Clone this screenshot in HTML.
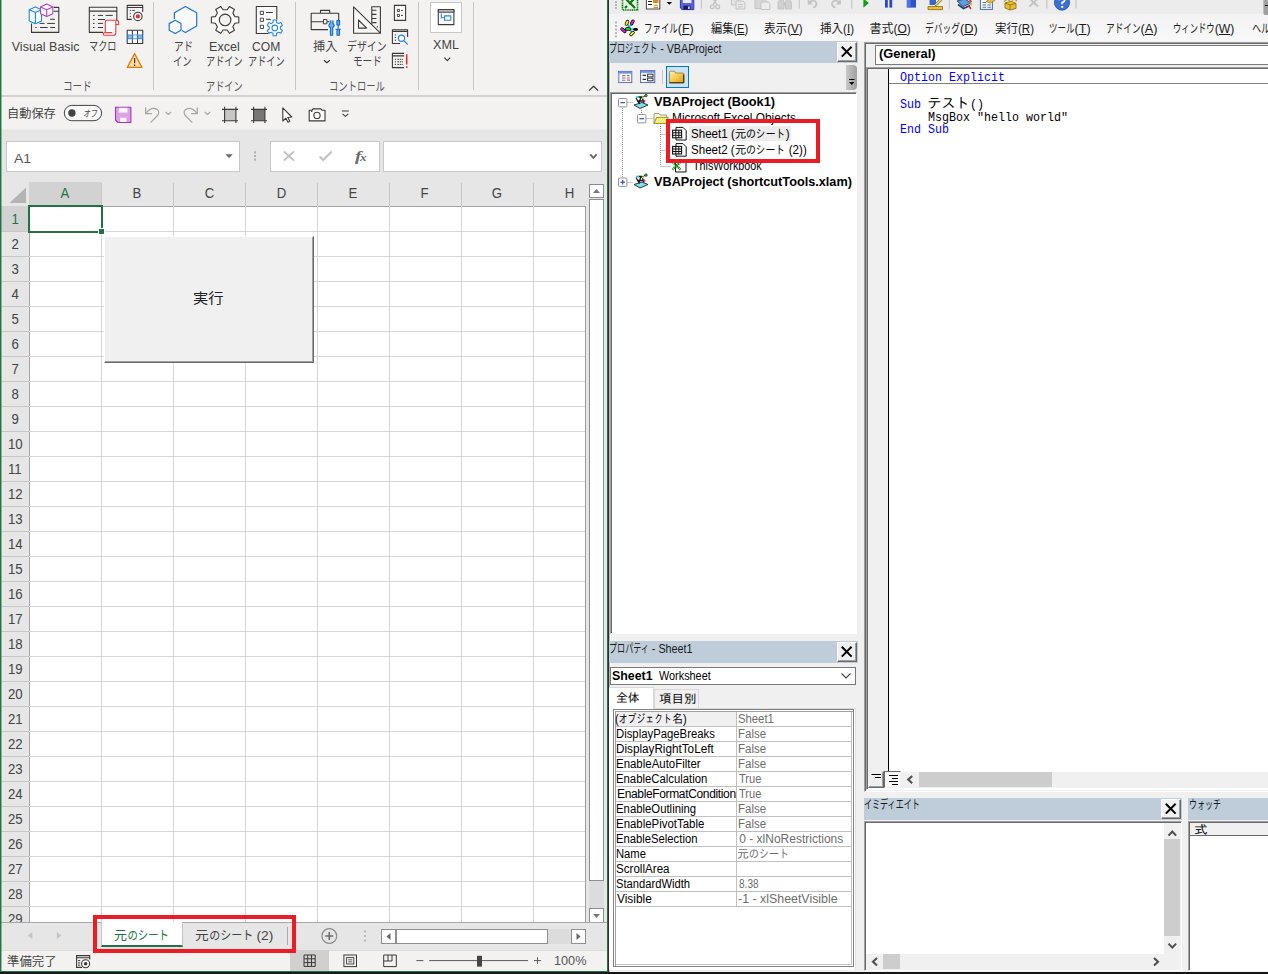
<!DOCTYPE html>
<html lang="ja"><head><meta charset="utf-8"><title>Excel VBA</title>
<style>
*{box-sizing:border-box;margin:0;padding:0}
html,body{width:1268px;height:974px;overflow:hidden;background:#f0f0f0}
body{position:relative;font-family:"Liberation Sans","Noto Sans CJK JP",sans-serif;font-size:12px;color:#444}
.a{position:absolute}
.t{position:absolute;white-space:nowrap;transform-origin:0 50%}
.k{display:inline-block;transform-origin:0 50%}
#xl{position:absolute;left:0;top:0;width:609px;height:974px;background:#fff;overflow:hidden}
#vbe{position:absolute;left:609px;top:0;width:659px;height:974px;background:#f0f0f0;overflow:hidden;font-family:"Liberation Sans","IPAGothic",sans-serif;color:#000}
.sep{position:absolute;width:1px;background:#c8c6c4;top:2px;height:88px}
.ch{position:absolute;background:#e6e6e6;top:182px;height:24px;text-align:center;line-height:22px;font-size:15px;color:#444}
.rh{position:absolute;background:#e6e6e6;left:1px;width:28px;text-align:center;font-size:15px;color:#444;line-height:26px;height:25px}
.vl{position:absolute;top:206px;width:1px;height:717px;background:#d6d6d6}
.hl{position:absolute;left:29px;height:1px;width:557px;background:#d6d6d6}
.cap{position:absolute;background:#bfcddb;height:22px}
.xb{position:absolute;width:20px;height:20px;background:#f0f0f0;border:1px solid;border-color:#fff #696969 #696969 #fff;box-shadow:inset -1px -1px 0 #a0a0a0}
.sunk{position:absolute;background:#fff;border:1px solid;border-color:#a0a0a0 #fff #fff #a0a0a0;box-shadow:inset 1px 1px 0 #696969}
.prl{position:absolute;height:1px;background:#c0c0c0}
.kw{color:#00f}
.hx{display:inline-block;transform:scaleX(.88)}
</style></head>
<body>
<div id="xl">
<div class="a" style="left:0;top:0;width:609px;height:96px;background:#f3f2f1"></div>
<div class="a" style="left:0;top:95px;width:609px;height:2px;background:#d4d2d0"></div>
<div class="a" style="left:0;top:97px;width:609px;height:34px;background:#f3f2f1"></div>
<div class="a" style="left:0;top:129px;width:609px;height:3px;background:linear-gradient(#ecebea,#e2e2e2)"></div>
<div class="a" style="left:0;top:132px;width:609px;height:50px;background:#e6e6e6"></div>
<div class="t" style="left:11.75px;top:38.5px;font-size:12.5px;line-height:16px;color:#444;">Visual Basic</div>
<div class="t" style="left:89.20px;top:38.5px;font-size:12px;line-height:16px;color:#444;transform:scaleX(1.0629);"><span class="k" style="transform:scaleX(0.72);margin-right:-10.08px">マクロ</span></div>
<div class="t" style="left:62.69px;top:78.8px;font-size:12px;line-height:16px;color:#555;transform:scaleX(1.1128);"><span class="k" style="transform:scaleX(0.72);margin-right:-10.08px">コード</span></div>
<div class="t" style="left:173.92px;top:38.5px;font-size:12px;line-height:16px;color:#444;transform:scaleX(1.1023);"><span class="k" style="transform:scaleX(0.72);margin-right:-6.72px">アド</span></div>
<div class="t" style="left:173.11px;top:54.0px;font-size:12px;line-height:16px;color:#444;transform:scaleX(1.0768);"><span class="k" style="transform:scaleX(0.72);margin-right:-6.72px">イン</span></div>
<div class="t" style="left:209.10px;top:38.5px;font-size:12.5px;line-height:16px;color:#444;">Excel</div>
<div class="t" style="left:206.30px;top:54.0px;font-size:12px;line-height:16px;color:#444;transform:scaleX(1.0579);"><span class="k" style="transform:scaleX(0.72);margin-right:-13.44px">アドイン</span></div>
<div class="t" style="left:252.36px;top:38.5px;font-size:12.5px;line-height:16px;color:#444;transform:scaleX(0.9683);">COM</div>
<div class="t" style="left:248.08px;top:54.0px;font-size:12px;line-height:16px;color:#444;transform:scaleX(1.0579);"><span class="k" style="transform:scaleX(0.72);margin-right:-13.44px">アドイン</span></div>
<div class="t" style="left:206.30px;top:78.8px;font-size:12px;line-height:16px;color:#555;transform:scaleX(1.0579);"><span class="k" style="transform:scaleX(0.72);margin-right:-13.44px">アドイン</span></div>
<div class="t" style="left:312.88px;top:38.5px;font-size:12px;line-height:16px;color:#444;transform:scaleX(1.0137);">挿入</div>
<div class="t" style="left:347.35px;top:38.5px;font-size:12px;line-height:16px;color:#444;transform:scaleX(1.1490);"><span class="k" style="transform:scaleX(0.72);margin-right:-13.44px">デザイン</span></div>
<div class="t" style="left:353.30px;top:54.0px;font-size:12px;line-height:16px;color:#444;transform:scaleX(1.1090);"><span class="k" style="transform:scaleX(0.72);margin-right:-10.08px">モード</span></div>
<div class="t" style="left:328.78px;top:78.8px;font-size:12px;line-height:16px;color:#555;transform:scaleX(1.0786);"><span class="k" style="transform:scaleX(0.72);margin-right:-20.16px">コントロール</span></div>
<div class="t" style="left:432.62px;top:36.8px;font-size:12.5px;line-height:16px;color:#444;transform:scaleX(1.0074);">XML</div>
<div class="sep" style="left:153px"></div>
<div class="sep" style="left:295px"></div>
<div class="sep" style="left:418px"></div>
<div class="sep" style="left:473px"></div>
<svg class="a" style="left:0;top:0" width="609" height="96" viewBox="0 0 609 96" fill="none" stroke-linejoin="round">
<path d="M53.5 7.4 H58.8 V32.4 H31.5 V23.5 M53.5 11.3 H58.8" stroke="#3b3a39" stroke-width="1.1"/>
<path d="M50.2 19.3 H54.9 M39.5 23.4 H44.6 M47.2 23.4 H54.9 M35.2 27.5 H36.6 M40 27.5 H47.7 M50.2 27.5 H54.9" stroke="#3b3a39" stroke-width="1"/>
<path d="M35.4 7 L41.5 9.7 V21 L35.4 23.8 L29.2 21 V9.7 Z" fill="#fafafa" stroke="#1e8bd8" stroke-width="1.1"/><path d="M29.2 9.7 L35.4 12.5 L41.5 9.7 M35.4 12.5 V23.8" stroke="#1e8bd8" stroke-width="1.1"/>
<path d="M46.7 4.1 L52.8 7 V13.8 L46.7 16.6 L40.5 13.8 V7 Z" fill="#fafafa" stroke="#b146c2" stroke-width="1.1"/><path d="M40.5 7 L46.7 9.7 L52.8 7 M46.7 9.7 V16.6" stroke="#b146c2" stroke-width="1.1"/>
<path d="M103 32.4 H89.3 V7.3 H116.8 V20 M89.3 11.1 H116.8" stroke="#3b3a39" stroke-width="1.1"/>
<path d="M93 15.4 H94.6 M97.9 15.4 H103 M105.6 15.4 H112.8 M93 19.5 H94.6 M97.9 19.5 H105 M93 23.4 H94.6 M97.9 23.4 H103 M93 27.5 H94.6 M97.9 27.5 H103" stroke="#3b3a39" stroke-width="1"/>
<path d="M105.3 32.6 V22.2 Q105.3 20.3 107.2 20.3 H116.5 Q118.7 20.3 118.7 22.4 V24.5 H115.8 V33 Q115.8 35.3 113.6 35.3 H105 Q103.2 35.3 103.2 33.9 Q103.2 32.6 105 32.6 H112.3" fill="#fafafa" stroke="#ee3b3e" stroke-width="1.1"/><path d="M115.8 24.5 V22.4 Q115.8 20.3 116.5 20.3" stroke="#ee3b3e" stroke-width="1.1"/>
<path d="M131.8 19.4 H127.2 V5.4 H142.7 V12 M127.2 7.5 H142.7" stroke="#3b3a39" stroke-width="1.1"/>
<path d="M129.8 10.4 H130.9 M132.3 10.4 H134.8 M129.8 13.4 H130.9 M129.8 16.4 H130.9" stroke="#3b3a39" stroke-width="1"/>
<circle cx="137.9" cy="16.4" r="4.2" fill="#fafafa" stroke="#3b3a39" stroke-width="1.1"/><circle cx="137.9" cy="16.4" r="2.1" fill="#e8282e"/>
<rect x="127.2" y="30.3" width="15.5" height="13.2" fill="#fafafa" stroke="#3b3a39" stroke-width="1.1"/>
<rect x="127.2" y="34.6" width="15.5" height="4.6" fill="#2b7cd3"/><rect x="128.2" y="35.3" width="3.6" height="3.2" fill="#83b9ee"/><rect x="133.2" y="35.3" width="3.6" height="3.2" fill="#fafafa"/><rect x="138.2" y="35.3" width="3.6" height="3.2" fill="#83b9ee"/>
<path d="M132.4 30.3 V34.6 M137.5 30.3 V34.6 M132.4 39.2 V43.5 M137.5 39.2 V43.5" stroke="#3b3a39" stroke-width="1"/>
<path d="M134.6 53.6 L142 67.4 H127.3 Z" fill="#fbd9a0" stroke="#e07c0c" stroke-width="1.2"/><path d="M134.6 58 V63.2 M134.6 64.6 V66" stroke="#3b3a39" stroke-width="1.2"/>
<path d="M174.4 19 V12.8 L185.4 6.4 L196.7 12.8 V26.1 L185.4 32.6 L182 30.6" fill="#fafafa" stroke="#1e74d2" stroke-width="1.2"/>
<path d="M175.2 20.3 L181 23.6 V30.2 L175.2 33.6 L169.2 30.2 V23.6 Z" fill="#fafafa" stroke="#1e74d2" stroke-width="1.2"/>
<path d="M234.86 16.61 L238.80 17.01 L238.80 22.79 L234.86 23.19 L232.83 26.71 L234.45 30.32 L229.45 33.21 L227.14 30.00 L223.06 30.00 L220.75 33.21 L215.75 30.32 L217.37 26.71 L215.34 23.19 L211.40 22.79 L211.40 17.01 L215.34 16.61 L217.37 13.09 L215.75 9.48 L220.75 6.59 L223.06 9.80 L227.14 9.80 L229.45 6.59 L234.45 9.48 L232.83 13.09 Z" fill="#fafafa" stroke="#3b3a39" stroke-width="1.1"/><circle cx="225.1" cy="19.9" r="5.8" stroke="#3b3a39" stroke-width="1.1" fill="#f3f2f1"/>
<path d="M268.5 33.5 H256.3 V6.5 H276.8 V19.5" stroke="#3b3a39" stroke-width="1.1" fill="#fafafa"/>
<rect x="260.3" y="11.3" width="3.2" height="3.2" stroke="#3b3a39" stroke-width="0.9"/>
<rect x="260.3" y="18.2" width="3.2" height="3.2" stroke="#3b3a39" stroke-width="0.9"/>
<rect x="260.3" y="25.3" width="3.2" height="3.2" stroke="#3b3a39" stroke-width="0.9"/>
<path d="M266.1 12.5 H272.8 M266.1 19.3 H271" stroke="#3b3a39" stroke-width="1"/>
<path d="M280.39 29.03 L282.40 30.38 L280.75 33.24 L278.57 32.18 L276.62 33.30 L276.45 35.73 L273.15 35.73 L272.98 33.30 L271.03 32.18 L268.85 33.24 L267.20 30.38 L269.21 29.03 L269.21 26.77 L267.20 25.42 L268.85 22.56 L271.03 23.62 L272.98 22.50 L273.15 20.07 L276.45 20.07 L276.62 22.50 L278.57 23.62 L280.75 22.56 L282.40 25.42 L280.39 26.77 Z" fill="#fafafa" stroke="#2b88d8" stroke-width="1.1"/><circle cx="274.8" cy="27.9" r="2.8" stroke="#2b88d8" stroke-width="1.1"/>
<path d="M328 29.6 H311.2 V13.2 H338.7 V20 M320.5 13.2 V10.4 H329.7 V13.2 M311.2 21.7 H323.4 M326.9 21.7 H329" stroke="#3b3a39" stroke-width="1.1" fill="none"/><rect x="323.4" y="19.6" width="3.5" height="4.2" stroke="#3b3a39" stroke-width="1" fill="#fafafa"/>
<path d="M330.1 20.6 V23.2 Q328.9 24 328.9 25.4 Q329 27 330.4 27.6 V35.2 H332.7 V27.6 Q334.1 27 334.2 25.4 Q334.2 24 333 23.2 V20.6" fill="#6bb1ef" stroke="#106ebe" stroke-width="1.1"/>
<path d="M336.9 20.6 H339.6 V25 H336.9 Z M338.25 25 V28.4 M335.6 29.3 H340.9 M337 29.3 V35.2 H339.5 V29.3" fill="#6bb1ef" stroke="#106ebe" stroke-width="1.1"/>
<path d="M324 60.2 L326.9 62.7 L329.8 60.2" stroke="#3b3a39" stroke-width="1.2"/><path d="M444.4 57.6 L447.3 60.6 L450.2 57.6" stroke="#3b3a39" stroke-width="1.2"/>
<path d="M353.6 6.8 V33.2 H380.4 Z" fill="#fafafa" stroke="#3b3a39" stroke-width="1.1"/><path d="M358.5 20 V28.1 H366.7 Z" stroke="#3b3a39" stroke-width="1.1" fill="#f3f2f1"/>
<path d="M371.8 24.6 V6.8 H380.4 V33.2 M372.3 10.3 H376.4 M372.3 14.4 H376.4 M372.3 18.5 H376.4 M372.6 22.6 H376.4 M376.8 26.9 H378" stroke="#3b3a39" stroke-width="1.1"/>
<rect x="394.4" y="5.4" width="11.2" height="15" fill="#fafafa" stroke="#3b3a39" stroke-width="1.1"/><rect x="397.4" y="9.4" width="2.1" height="2.1" stroke="#3b3a39" stroke-width="0.9"/><rect x="397.4" y="14.4" width="2.1" height="2.1" stroke="#3b3a39" stroke-width="0.9"/><path d="M401 10.5 H402.9 M401 15.4 H402.9" stroke="#3b3a39" stroke-width="1"/>
<path d="M400 43.5 H392.4 V29.8 H407.6 V37 M392.4 31.4 H407.6" stroke="#3b3a39" stroke-width="1.1"/><path d="M394.8 34.9 H396 M394.8 37.4 H396 M394.8 40.2 H396" stroke="#3b3a39" stroke-width="1"/>
<circle cx="401.5" cy="38.3" r="3.1" stroke="#2b88d8" stroke-width="1.2" fill="#fafafa"/><path d="M403.8 40.6 L407.8 44.6" stroke="#2b88d8" stroke-width="1.3"/>
<path d="M404.1 67.6 H392.4 V53.4 H404.1 M392.4 55.9 H404.1" stroke="#3b3a39" stroke-width="1.1"/><path d="M394.8 59.3 H396 M397.4 59.3 H403 M394.8 61.8 H396 M397.4 61.8 H403 M394.8 64.4 H396 M397.4 64.4 H403" stroke="#3b3a39" stroke-width="1" stroke-dasharray="1.6 0.8"/>
<path d="M406.7 54.3 V64.4 M406.7 66.2 V68" stroke="#e8282e" stroke-width="1.5"/>
<rect x="430.5" y="2.5" width="31" height="30" fill="#fff" stroke="#c8c6c4" stroke-width="1"/>
<rect x="438.3" y="9.6" width="15.6" height="15" fill="#fafafa" stroke="#3b3a39" stroke-width="1.1"/><rect x="438.3" y="9.6" width="15.6" height="2.6" fill="#c8c6c4" stroke="#3b3a39" stroke-width="1"/>
<path d="M441.3 13.4 V17.8 H444.5" stroke="#2b88d8" stroke-width="1.1"/><rect x="444.6" y="15.9" width="6.2" height="4.3" stroke="#2b88d8" stroke-width="1.1" fill="#fafafa"/>
<path d="M589 90.6 L593.6 86.2 L598.2 90.6" stroke="#3b3a39" stroke-width="1.3"/>
</svg>
<div class="t" style="left:7.13px;top:105.6px;font-size:12px;line-height:16px;color:#444;transform:scaleX(1.0170);">自動保存</div>
<svg class="a" style="left:0;top:97px" width="609" height="34" viewBox="0 97 609 34" fill="none" stroke-linejoin="round">
<rect x="64.3" y="105.4" width="37.3" height="15.3" rx="7.6" fill="#fafafa" stroke="#444" stroke-width="1"/><circle cx="71.9" cy="113" r="3.7" fill="#444"/>
<path d="M115.5 107.2 H130.9 V122.5 H118 L115.5 120 Z" fill="#dba3e3" stroke="#a335b8" stroke-width="1.1"/><rect x="118.9" y="107.8" width="8.6" height="4.8" fill="#fdf6ff"/><rect x="120.2" y="117.7" width="6.2" height="4.3" fill="#fdf6ff"/>
<path d="M145.6 107.5 V113.7 H151.9" stroke="#a6a6a6" stroke-width="1.2"/><path d="M146 113.4 Q150 107.6 155.5 108.6 Q160.4 110.4 158 115 L150.6 122.6" stroke="#a6a6a6" stroke-width="1.2"/>
<path d="M165.6 112 L168.3 114.5 L171 112" stroke="#a6a6a6" stroke-width="1.1"/>
<path d="M197.3 107.5 V113.7 H191" stroke="#a6a6a6" stroke-width="1.2"/><path d="M196.9 113.4 Q192.9 107.6 187.4 108.6 Q182.5 110.4 184.9 115 L192.3 122.6" stroke="#a6a6a6" stroke-width="1.2"/>
<path d="M204.7 112 L207.4 114.5 L210.1 112" stroke="#a6a6a6" stroke-width="1.1"/>
<rect x="224.6" y="109.4" width="11.3" height="11.3" fill="#c8c6c4"/><path d="M222 109.4 H238 M222 120.7 H238 M224.6 106.8 V122.9 M235.9 106.8 V122.9" stroke="#3b3a39" stroke-width="1.1"/>
<rect x="253.6" y="109.4" width="11.3" height="11.3" fill="#797775"/><path d="M251 109.4 H267 M251 120.7 H267 M253.6 106.8 V122.9 M264.9 106.8 V122.9" stroke="#3b3a39" stroke-width="1.1"/>
<path d="M282.8 107.9 V121 L285.9 118.2 L288 122.2 L289.8 121.3 L287.8 117.5 L291.8 117 Z" fill="#fff" stroke="#3b3a39" stroke-width="1.1"/>
<path d="M309.2 110.2 H312 L313 108.9 H321 L322 110.2 H325 V120.9 H309.2 Z" stroke="#3b3a39" stroke-width="1.1" fill="#fafafa"/><circle cx="317" cy="115.4" r="3.1" stroke="#3b3a39" stroke-width="1.1"/><circle cx="311.7" cy="111.3" r="0.8" fill="#3b3a39"/>
<path d="M341.9 111 H348.8 M342.5 113.8 L345.4 116.4 L348.3 113.8" stroke="#3b3a39" stroke-width="1.1"/>
</svg>
<div class="t" style="left:82.51px;top:108.2px;font-size:9.5px;line-height:12px;color:#444;transform:scaleX(0.9201);font-style:italic;"><span class="k" style="transform:scaleX(0.8);margin-right:-3.80px">オフ</span></div>
<div class="a" style="left:6px;top:141px;width:234px;height:31px;background:#fff;border:1px solid #c8c8c8"></div>
<div class="t" style="left:13.59px;top:149.8px;font-size:13.5px;line-height:18px;color:#555;transform:scaleX(1.0384);">A1</div>
<div class="a" style="left:270px;top:141px;width:110px;height:31px;background:#fff;border:1px solid #c8c8c8"></div>
<div class="a" style="left:383px;top:141px;width:219px;height:31px;background:#fff;border:1px solid #c8c8c8"></div>
<div class="t" style="left:355.02px;top:146.5px;font-size:14.5px;line-height:19px;color:#6a6a6a;font-family:'Liberation Serif',serif;transform:scaleX(1.3237);font-style:italic;font-weight:bold;letter-spacing:-1px;">f<span style="font-size:10px">x</span></div>
<svg class="a" style="left:0;top:140px" width="609" height="34" viewBox="0 140 609 34" fill="none">
<path d="M225.4 154.2 H232.8 L229.1 158 Z" fill="#666"/>
<rect x="254" y="151.4" width="2" height="2" fill="#b0b0b0"/><rect x="254" y="155" width="2" height="2" fill="#b0b0b0"/><rect x="254" y="158.6" width="2" height="2" fill="#b0b0b0"/>
<path d="M283.8 151.4 L294 160.6 M294 151.4 L283.8 160.6" stroke="#bcbcbc" stroke-width="1.7"/>
<path d="M319.6 156.4 L323.2 160 L331.8 151.6" stroke="#c0c0c0" stroke-width="2.1"/>
<path d="M590.2 154.4 L593.4 157.8 L596.6 154.4" stroke="#666" stroke-width="1.9"/>
</svg>
<div class="a" style="left:0;top:182px;width:609px;height:24px;background:#e6e6e6"></div>
<div class="ch" style="left:29px;width:72px;background:#d2d2d2;color:#217346"><span class="hx">A</span></div>
<div class="ch" style="left:101px;width:72px;background:#e6e6e6;color:#444"><span class="hx">B</span></div>
<div class="ch" style="left:173px;width:72px;background:#e6e6e6;color:#444"><span class="hx">C</span></div>
<div class="ch" style="left:245px;width:72px;background:#e6e6e6;color:#444"><span class="hx">D</span></div>
<div class="ch" style="left:317px;width:72px;background:#e6e6e6;color:#444"><span class="hx">E</span></div>
<div class="ch" style="left:389px;width:72px;background:#e6e6e6;color:#444"><span class="hx">F</span></div>
<div class="ch" style="left:461px;width:72px;background:#e6e6e6;color:#444"><span class="hx">G</span></div>
<div class="ch" style="left:533px;width:72px;background:#e6e6e6;color:#444"><span class="hx">H</span></div>
<div class="a" style="left:101px;top:183px;width:1px;height:23px;background:#c6c6c6"></div>
<div class="a" style="left:173px;top:183px;width:1px;height:23px;background:#c6c6c6"></div>
<div class="a" style="left:245px;top:183px;width:1px;height:23px;background:#c6c6c6"></div>
<div class="a" style="left:317px;top:183px;width:1px;height:23px;background:#c6c6c6"></div>
<div class="a" style="left:389px;top:183px;width:1px;height:23px;background:#c6c6c6"></div>
<div class="a" style="left:461px;top:183px;width:1px;height:23px;background:#c6c6c6"></div>
<div class="a" style="left:533px;top:183px;width:1px;height:23px;background:#c6c6c6"></div>
<div class="a" style="left:605px;top:183px;width:1px;height:23px;background:#c6c6c6"></div>
<div class="a" style="left:1px;top:206px;width:586px;height:1px;background:#a6a6a6"></div>
<svg class="a" style="left:8px;top:186px" width="20" height="18"><path d="M1.5 17 L18 17 L18 1.5 Z" fill="#b4b4b4"/></svg>
<div class="rh" style="top:206px;background:#d2d2d2;color:#217346"><span class="hx">1</span></div>
<div class="rh" style="top:231px;background:#e6e6e6;color:#444"><span class="hx">2</span></div>
<div class="rh" style="top:256px;background:#e6e6e6;color:#444"><span class="hx">3</span></div>
<div class="rh" style="top:281px;background:#e6e6e6;color:#444"><span class="hx">4</span></div>
<div class="rh" style="top:306px;background:#e6e6e6;color:#444"><span class="hx">5</span></div>
<div class="rh" style="top:331px;background:#e6e6e6;color:#444"><span class="hx">6</span></div>
<div class="rh" style="top:356px;background:#e6e6e6;color:#444"><span class="hx">7</span></div>
<div class="rh" style="top:381px;background:#e6e6e6;color:#444"><span class="hx">8</span></div>
<div class="rh" style="top:406px;background:#e6e6e6;color:#444"><span class="hx">9</span></div>
<div class="rh" style="top:431px;background:#e6e6e6;color:#444"><span class="hx">10</span></div>
<div class="rh" style="top:456px;background:#e6e6e6;color:#444"><span class="hx">11</span></div>
<div class="rh" style="top:481px;background:#e6e6e6;color:#444"><span class="hx">12</span></div>
<div class="rh" style="top:506px;background:#e6e6e6;color:#444"><span class="hx">13</span></div>
<div class="rh" style="top:531px;background:#e6e6e6;color:#444"><span class="hx">14</span></div>
<div class="rh" style="top:556px;background:#e6e6e6;color:#444"><span class="hx">15</span></div>
<div class="rh" style="top:581px;background:#e6e6e6;color:#444"><span class="hx">16</span></div>
<div class="rh" style="top:606px;background:#e6e6e6;color:#444"><span class="hx">17</span></div>
<div class="rh" style="top:631px;background:#e6e6e6;color:#444"><span class="hx">18</span></div>
<div class="rh" style="top:656px;background:#e6e6e6;color:#444"><span class="hx">19</span></div>
<div class="rh" style="top:681px;background:#e6e6e6;color:#444"><span class="hx">20</span></div>
<div class="rh" style="top:706px;background:#e6e6e6;color:#444"><span class="hx">21</span></div>
<div class="rh" style="top:731px;background:#e6e6e6;color:#444"><span class="hx">22</span></div>
<div class="rh" style="top:756px;background:#e6e6e6;color:#444"><span class="hx">23</span></div>
<div class="rh" style="top:781px;background:#e6e6e6;color:#444"><span class="hx">24</span></div>
<div class="rh" style="top:806px;background:#e6e6e6;color:#444"><span class="hx">25</span></div>
<div class="rh" style="top:831px;background:#e6e6e6;color:#444"><span class="hx">26</span></div>
<div class="rh" style="top:856px;background:#e6e6e6;color:#444"><span class="hx">27</span></div>
<div class="rh" style="top:881px;background:#e6e6e6;color:#444"><span class="hx">28</span></div>
<div class="rh" style="top:906px;background:#e6e6e6;color:#444"><span class="hx">29</span></div>
<div class="a" style="left:1px;top:231px;width:28px;height:1px;background:#c6c6c6"></div>
<div class="a" style="left:1px;top:256px;width:28px;height:1px;background:#c6c6c6"></div>
<div class="a" style="left:1px;top:281px;width:28px;height:1px;background:#c6c6c6"></div>
<div class="a" style="left:1px;top:306px;width:28px;height:1px;background:#c6c6c6"></div>
<div class="a" style="left:1px;top:331px;width:28px;height:1px;background:#c6c6c6"></div>
<div class="a" style="left:1px;top:356px;width:28px;height:1px;background:#c6c6c6"></div>
<div class="a" style="left:1px;top:381px;width:28px;height:1px;background:#c6c6c6"></div>
<div class="a" style="left:1px;top:406px;width:28px;height:1px;background:#c6c6c6"></div>
<div class="a" style="left:1px;top:431px;width:28px;height:1px;background:#c6c6c6"></div>
<div class="a" style="left:1px;top:456px;width:28px;height:1px;background:#c6c6c6"></div>
<div class="a" style="left:1px;top:481px;width:28px;height:1px;background:#c6c6c6"></div>
<div class="a" style="left:1px;top:506px;width:28px;height:1px;background:#c6c6c6"></div>
<div class="a" style="left:1px;top:531px;width:28px;height:1px;background:#c6c6c6"></div>
<div class="a" style="left:1px;top:556px;width:28px;height:1px;background:#c6c6c6"></div>
<div class="a" style="left:1px;top:581px;width:28px;height:1px;background:#c6c6c6"></div>
<div class="a" style="left:1px;top:606px;width:28px;height:1px;background:#c6c6c6"></div>
<div class="a" style="left:1px;top:631px;width:28px;height:1px;background:#c6c6c6"></div>
<div class="a" style="left:1px;top:656px;width:28px;height:1px;background:#c6c6c6"></div>
<div class="a" style="left:1px;top:681px;width:28px;height:1px;background:#c6c6c6"></div>
<div class="a" style="left:1px;top:706px;width:28px;height:1px;background:#c6c6c6"></div>
<div class="a" style="left:1px;top:731px;width:28px;height:1px;background:#c6c6c6"></div>
<div class="a" style="left:1px;top:756px;width:28px;height:1px;background:#c6c6c6"></div>
<div class="a" style="left:1px;top:781px;width:28px;height:1px;background:#c6c6c6"></div>
<div class="a" style="left:1px;top:806px;width:28px;height:1px;background:#c6c6c6"></div>
<div class="a" style="left:1px;top:831px;width:28px;height:1px;background:#c6c6c6"></div>
<div class="a" style="left:1px;top:856px;width:28px;height:1px;background:#c6c6c6"></div>
<div class="a" style="left:1px;top:881px;width:28px;height:1px;background:#c6c6c6"></div>
<div class="a" style="left:1px;top:906px;width:28px;height:1px;background:#c6c6c6"></div>
<div class="a" style="left:1px;top:931px;width:28px;height:1px;background:#c6c6c6"></div>
<div class="a" style="left:29px;top:206px;width:1px;height:717px;background:#a6a6a6"></div>
<div class="vl" style="left:101px"></div>
<div class="vl" style="left:173px"></div>
<div class="vl" style="left:245px"></div>
<div class="vl" style="left:317px"></div>
<div class="vl" style="left:389px"></div>
<div class="vl" style="left:461px"></div>
<div class="vl" style="left:533px"></div>
<div class="vl" style="left:605px"></div>
<div class="hl" style="top:231px"></div>
<div class="hl" style="top:256px"></div>
<div class="hl" style="top:281px"></div>
<div class="hl" style="top:306px"></div>
<div class="hl" style="top:331px"></div>
<div class="hl" style="top:356px"></div>
<div class="hl" style="top:381px"></div>
<div class="hl" style="top:406px"></div>
<div class="hl" style="top:431px"></div>
<div class="hl" style="top:456px"></div>
<div class="hl" style="top:481px"></div>
<div class="hl" style="top:506px"></div>
<div class="hl" style="top:531px"></div>
<div class="hl" style="top:556px"></div>
<div class="hl" style="top:581px"></div>
<div class="hl" style="top:606px"></div>
<div class="hl" style="top:631px"></div>
<div class="hl" style="top:656px"></div>
<div class="hl" style="top:681px"></div>
<div class="hl" style="top:706px"></div>
<div class="hl" style="top:731px"></div>
<div class="hl" style="top:756px"></div>
<div class="hl" style="top:781px"></div>
<div class="hl" style="top:806px"></div>
<div class="hl" style="top:831px"></div>
<div class="hl" style="top:856px"></div>
<div class="hl" style="top:881px"></div>
<div class="hl" style="top:906px"></div>
<div class="hl" style="top:931px"></div>
<div class="a" style="left:28px;top:205px;width:75px;height:28px;border:2px solid #217346"></div>
<div class="a" style="left:98px;top:228px;width:7px;height:7px;background:#217346;border:1px solid #fff"></div>
<div class="a" style="left:104px;top:236px;width:210px;height:127px;background:#f0f0f0;border:1px solid;border-color:#fff #696969 #696969 #fff;box-shadow:inset -1px -1px 0 #a0a0a0"></div>
<div class="t" style="left:193.44px;top:289.2px;font-size:14px;line-height:18px;color:#222;transform:scaleX(1.0884);">実行</div>
<div class="a" style="left:586px;top:182px;width:21px;height:741px;background:#e6e6e6"></div>
<div class="a" style="left:585px;top:207px;width:1px;height:716px;background:#9e9e9e"></div>
<div class="a" style="left:589px;top:199px;width:15px;height:682px;background:#fff;border:1px solid #8e8e8e"></div>
<div class="a" style="left:589px;top:184px;width:15px;height:14px;background:#fff;border:1px solid #8e8e8e"></div>
<div class="a" style="left:589px;top:908px;width:15px;height:15px;background:#fff;border:1px solid #8e8e8e"></div>
<svg class="a" style="left:589px;top:184px" width="15" height="14"><path d="M4 9 L11 9 L7.5 5 Z" fill="#777"/></svg>
<svg class="a" style="left:589px;top:908px" width="15" height="15"><path d="M4 6 L11 6 L7.5 10 Z" fill="#777"/></svg>
<div class="a" style="left:589px;top:881px;width:15px;height:27px;background:#dcdcdc"></div>
<div class="a" style="left:0;top:922px;width:609px;height:29px;background:#e6e6e6;border-top:1px solid #a6a6a6"></div>
<div class="a" style="left:101px;top:922px;width:82px;height:25px;background:#fff;border-bottom:2px solid #217346;border-left:1px solid #c6c6c6;border-right:1px solid #c6c6c6"></div>
<div class="t" style="left:113.61px;top:927.6px;font-size:12.5px;line-height:16px;color:#217346;transform:scaleX(1.0377);">元<span class="k" style="transform:scaleX(0.8);margin-right:-10.00px">のシート</span></div>
<div class="t" style="left:195.40px;top:927.6px;font-size:12.5px;line-height:16px;color:#444;transform:scaleX(1.0990);">元<span class="k" style="transform:scaleX(0.8);margin-right:-10.00px">のシート</span> (2)</div>
<div class="a" style="left:287px;top:927px;width:1px;height:18px;background:#ababab"></div>
<svg class="a" style="left:24px;top:928px" width="40" height="14"><path d="M8.3 4 L3.8 7.5 L8.3 11 Z M32.8 4 L37.3 7.5 L32.8 11 Z" fill="#c4c4c4"/></svg>
<svg class="a" style="left:319px;top:926px" width="20" height="20"><circle cx="10.3" cy="10" r="7.4" fill="none" stroke="#8a8a8a" stroke-width="1.2"/><path d="M6.3 10 H14.3 M10.3 6 V14" stroke="#6a6a6a" stroke-width="1.6"/></svg>
<svg class="a" style="left:362px;top:929px" width="6" height="14"><circle cx="3" cy="2.5" r="1" fill="#aaa"/><circle cx="3" cy="7" r="1" fill="#aaa"/><circle cx="3" cy="11.5" r="1" fill="#aaa"/></svg>
<div class="a" style="left:381px;top:929px;width:205px;height:15px;background:#dcdcdc"></div>
<div class="a" style="left:381px;top:929px;width:15px;height:15px;background:#fff;border:1px solid #8e8e8e"></div>
<div class="a" style="left:396px;top:929px;width:152px;height:15px;background:#fff;border:1px solid #8e8e8e"></div>
<div class="a" style="left:571px;top:929px;width:15px;height:15px;background:#fff;border:1px solid #8e8e8e"></div>
<svg class="a" style="left:381px;top:929px" width="15" height="15"><path d="M9.5 4 L9.5 11 L5.5 7.5 Z" fill="#666"/></svg>
<svg class="a" style="left:571px;top:929px" width="15" height="15"><path d="M5.5 4 L5.5 11 L9.5 7.5 Z" fill="#666"/></svg>
<div class="a" style="left:0;top:950px;width:609px;height:22px;background:#f3f2f1;border-top:1px solid #dcdcdc"></div>
<div class="t" style="left:7.47px;top:954.3px;font-size:12px;line-height:16px;color:#444;transform:scaleX(1.0336);">準備完了</div>
<div class="a" style="left:290px;top:950px;width:39px;height:22px;background:#d2d0ce"></div>
<svg class="a" style="left:0;top:950px" width="609" height="22" viewBox="0 950 609 22" fill="none">
<path d="M82 967.4 H76.6 V955.6 H89.7 V959.5 M76.6 957.7 H89.7" stroke="#3b3a39" stroke-width="1.1"/><path d="M78 960.6 H80.2 M78 962.9 H80.2 M78 965.1 H80.2" stroke="#3b3a39" stroke-width="1"/><circle cx="85.6" cy="963.7" r="4" stroke="#3b3a39" stroke-width="1.1" fill="#fafafa"/><circle cx="85.6" cy="963.7" r="1.7" fill="#3b3a39"/>
<path d="M304 955 H315.2 V966.4 H304 Z M304 958.8 H315.2 M304 962.6 H315.2 M307.7 955 V966.4 M311.5 955 V966.4" stroke="#3b3a39" stroke-width="1"/>
<rect x="343.9" y="955" width="12.6" height="11.6" stroke="#3b3a39" stroke-width="1"/><rect x="346.6" y="957.6" width="7.2" height="6.4" stroke="#3b3a39" stroke-width="0.9"/><path d="M348.2 959.8 H352.2 M348.2 961.8 H352.2" stroke="#3b3a39" stroke-width="0.8"/>
<path d="M383.7 955 H396.3 V966.6 H383.7 Z M383.7 961 H392 V955 M388 955 V961" stroke="#3b3a39" stroke-width="1"/>
<path d="M416.4 960.6 H423.4 M429.2 960.6 H528 M534 960.6 H541 M537.5 957.2 V964" stroke="#5a5a5a" stroke-width="1"/><rect x="477" y="955.8" width="5" height="10.8" fill="#444"/>
</svg>
<div class="t" style="left:554.19px;top:953.0px;font-size:12.5px;line-height:16px;color:#555;transform:scaleX(1.0143);">100%</div>
<div class="a" style="left:93.3px;top:914.7px;width:202.9px;height:38px;border:4.9px solid #ed1c24"></div>
<div class="a" style="left:0;top:0;width:1px;height:974px;background:#217346"></div><div class="a" style="left:1px;top:0;width:1px;height:974px;background:rgba(33,115,70,.45)"></div>
<div class="a" style="left:0;top:971px;width:609px;height:1px;background:#217346"></div>
<div class="a" style="left:0;top:972px;width:609px;height:2px;background:#1a1a1a"></div>
<div class="a" style="left:607px;top:0;width:1px;height:972px;background:#217346"></div>
<div class="a" style="left:608px;top:0;width:1px;height:972px;background:#2e302f"></div>
</div>
<div id="vbe">
<div class="a" style="left:0;top:0;width:1px;height:972px;background:#b4b4b4"></div><div class="a" style="left:1px;top:0;width:1px;height:972px;background:rgba(255,255,255,.7)"></div>
<div class="a" style="left:0;top:0;width:659px;height:14px;background:#ececec"></div>
<div class="a" style="left:0;top:14px;width:659px;height:27px;background:linear-gradient(#f3f3f3,#f8f8f8)"></div>
<svg class="a" style="left:0;top:0" width="659" height="41" viewBox="609 0 659 41" fill="none">
<rect x="615" y="1" width="2" height="2" fill="#b8b8b8"/>
<rect x="615" y="4" width="2" height="2" fill="#b8b8b8"/>
<rect x="615" y="7" width="2" height="2" fill="#b8b8b8"/>
<rect x="615" y="21.5" width="2" height="2" fill="#b8b8b8"/>
<rect x="615" y="25" width="2" height="2" fill="#b8b8b8"/>
<rect x="615" y="28.5" width="2" height="2" fill="#b8b8b8"/>
<rect x="615" y="32" width="2" height="2" fill="#b8b8b8"/>
<rect x="615" y="35.5" width="2" height="2" fill="#b8b8b8"/>
<rect x="622.5" y="-3" width="15" height="13" fill="#e8f3e8" stroke="#0a7a0a" stroke-width="1.6" stroke-dasharray="1.2 0.6"/><path d="M625 -2 L635 8 M635 -2 L629 4 M627 6 L625 8" stroke="#0a7a0a" stroke-width="2.2"/>
<rect x="646.4" y="-3" width="13.4" height="12" fill="#fff" stroke="#444" stroke-width="1"/><rect x="653" y="-2" width="5.4" height="5" fill="#d98a1a"/><path d="M648 1.5 H652 M648 4.5 H652" stroke="#222" stroke-width="1"/><path d="M653.6 5.2 H658 M653.6 7.4 H658" stroke="#d98a1a" stroke-width="1.1"/>
<path d="M666.7 1.9 H672.1 L669.4 4.7 Z" fill="#000"/>
<path d="M680.4 -2 H693.8 V9.6 H682 L680.4 8 Z" fill="#5a63d8" stroke="#2a2fa0" stroke-width="0.9"/><rect x="682.8" y="-2" width="8.6" height="5" fill="#e8ecff"/><rect x="683.4" y="5.6" width="7.2" height="4" fill="#1a1f5a"/><rect x="688" y="6.4" width="1.8" height="2.6" fill="#c8c8e8"/>
<path d="M701.4 0 V8.5" stroke="#c0c0c0" stroke-width="1"/>
<path d="M799.2 0 V8.5" stroke="#c0c0c0" stroke-width="1"/>
<path d="M851.8 0 V8.5" stroke="#c0c0c0" stroke-width="1"/>
<path d="M949.3 0 V8.5" stroke="#c0c0c0" stroke-width="1"/>
<path d="M1046.8 0 V8.5" stroke="#c0c0c0" stroke-width="1"/>
<path d="M1076 0 V8.5" stroke="#c0c0c0" stroke-width="1"/>
<path d="M712.5 -2 L717.2 5 M717.5 -2 L712.8 5" stroke="#c4c4c4" stroke-width="1.4"/><circle cx="712.3" cy="6.8" r="1.9" stroke="#c4c4c4" stroke-width="1.3"/><circle cx="717.7" cy="6.8" r="1.9" stroke="#c4c4c4" stroke-width="1.3"/>
<path d="M731.5 -2 H739 V5 H731.5 Z" fill="#e4e4e4" stroke="#c4c4c4"/><path d="M736 1 H743 L745 3 V9 H736 Z" fill="#e8e8e8" stroke="#c4c4c4"/><path d="M738 4.5 H743 M738 6.8 H743" stroke="#c4c4c4" stroke-width="0.9"/>
<path d="M755 -2 H766 V8.5 H755 Z" fill="#d6d6d6" stroke="#c4c4c4"/><path d="M761 2 H768.5 L769.8 3.4 V9.5 H761 Z" fill="#ececec" stroke="#c4c4c4"/>
<path d="M778 9 V2 L780.5 -1 H783 L784 2 V9 Z M785.5 9 V2 L786.5 -1 H789 L791.5 2 V9 Z" fill="#d0d0d0" stroke="#c4c4c4" stroke-width="0.9"/><rect x="783.5" y="2.5" width="2.5" height="3" fill="#c4c4c4"/>
<path d="M809 2.4 Q814 -1.5 816.4 3 Q817 6.5 813 7.5" stroke="#c4c4c4" stroke-width="1.8"/><path d="M807.6 -1 V4.4 H813 Z" fill="#c4c4c4"/>
<path d="M839.5 2.4 Q834.5 -1.5 832.1 3 Q831.5 6.5 835.5 7.5" stroke="#c4c4c4" stroke-width="1.8"/><path d="M840.9 -1 V4.4 H835.5 Z" fill="#c4c4c4"/>
<path d="M863.4 -1.5 V7.8 L868.9 3.1 Z" fill="#12a012"/>
<rect x="885" y="-1" width="2.8" height="8.6" fill="#2848c8"/><rect x="889.4" y="-1" width="2.8" height="8.6" fill="#2848c8"/>
<rect x="906.8" y="-1" width="9.2" height="8.6" fill="#3050d0"/><rect x="906.8" y="-1" width="4" height="8.6" fill="#6888f0" opacity=".6"/>
<path d="M928 6.5 H942.5 V9.6 H928 Z" fill="#f0c030" stroke="#8a6a10" stroke-width="0.8"/><path d="M929.5 5 V-1 H936 V5 Z" fill="#3a66c8"/><path d="M934.5 4.5 L940.8 -1.8 L942.4 -0.2 L936.2 6 Z" fill="#f0d060" stroke="#555" stroke-width="0.7"/>
<path d="M957 1 L965 -1 L971 3 L963 6.5 Z" fill="#5aa0e0" stroke="#223a6a" stroke-width="0.9"/><path d="M958 4.5 L963.5 8.5 L970 5.5" stroke="#223a6a" stroke-width="1.6"/><path d="M969 -1 L971.5 2 M968.5 5.5 L971 9" stroke="#d03030" stroke-width="1.6"/><circle cx="970.8" cy="3.8" r="1.4" fill="#e8b020"/>
<rect x="980.4" y="-2" width="12" height="11.4" fill="#f4f8ff" stroke="#4a6a9a" stroke-width="1"/><path d="M982.5 2.5 H986 M982.5 5 H986 M982.5 7.3 H986 M987.5 5 H991 M987.5 7.3 H991" stroke="#4a6a9a" stroke-width="0.9"/><path d="M986 1.5 L992 -2 L995 0.5 L990 3.2 Z" fill="#e8c040" stroke="#7a6a20" stroke-width="0.6"/><path d="M992.5 -1.5 L995 -2.5" stroke="#2a9a2a" stroke-width="1.5"/>
<path d="M1005 3 L1011 1.2 L1016 3.4 V8.4 L1010 10 L1005 8 Z" fill="#e8c030" stroke="#8a6a10" stroke-width="0.8"/><path d="M1005 3 L1010 5 L1016 3.4 M1010 5 V10" stroke="#8a6a10" stroke-width="0.8"/><path d="M1004 1.4 L1007.5 -0.8 L1010 1 M1012 0.5 L1014.5 -1 L1017 1.2" stroke="#c89a20" stroke-width="1.2"/>
<path d="M1029 -2 L1038 6.5 M1038.5 -2 L1029.5 6.5" stroke="#c4c4c4" stroke-width="2"/>
<circle cx="1062" cy="2.6" r="7.6" fill="#3d6fd0"/><circle cx="1062" cy="2.6" r="7.6" fill="none" stroke="#2a4fa8" stroke-width="0.8"/><path d="M1059.2 0.2 Q1059.4 -2.8 1062.2 -2.8 Q1065 -2.6 1064.8 0 Q1064.6 1.6 1062.2 2.6 V4.2" stroke="#fff" stroke-width="1.8"/><circle cx="1062.2" cy="6.9" r="1.1" fill="#fff"/>
<path d="M1263.4 0 H1268 V15 H1265.4 Q1263.4 15 1263.4 13 Z" fill="#a0a0a0"/><path d="M1265 5.5 H1268" stroke="#000" stroke-width="1"/>
<path d="M624 30 L633 24 M627 22.5 L632 33.5 M629 29 L636.5 29.5" stroke="#00b8c8" stroke-width="1.4"/><path d="M622 29 L624.8 31.4" stroke="#000" stroke-width="3.4" stroke-linecap="round"/><path d="M622 29 L624.8 31.4" stroke="#e020e0" stroke-width="2" stroke-linecap="round"/><path d="M626.4 24 L627.6 21.6" stroke="#000" stroke-width="3.4" stroke-linecap="round"/><path d="M626.4 24 L627.6 21.6" stroke="#f0f020" stroke-width="2" stroke-linecap="round"/><path d="M631.6 23.6 L633 21.2" stroke="#000" stroke-width="3.4" stroke-linecap="round"/><path d="M631.6 23.6 L633 21.2" stroke="#e020e0" stroke-width="2" stroke-linecap="round"/><path d="M631 34.4 L633 32.6" stroke="#000" stroke-width="3.4" stroke-linecap="round"/><path d="M631 34.4 L633 32.6" stroke="#f0f020" stroke-width="2" stroke-linecap="round"/><path d="M626.8 29 H629.4" stroke="#000" stroke-width="3.4" stroke-linecap="round"/><path d="M626.8 29 H629.4" stroke="#20d020" stroke-width="2" stroke-linecap="round"/><path d="M634.6 29.4 H636.6" stroke="#000" stroke-width="2.6" stroke-linecap="round"/>
</svg>
<div class="t" style="left:35.03px;top:20.9px;font-size:12px;line-height:16px;color:#1a1a1a;font-family:'Liberation Sans','Noto Sans CJK JP',sans-serif;transform:scaleX(1.0350);"><span class="k" style="transform:scaleX(0.68);margin-right:-15.36px">ファイル</span>(<u>F</u>)</div>
<div class="t" style="left:101.79px;top:20.9px;font-size:12px;line-height:16px;color:#1a1a1a;font-family:'Liberation Sans','Noto Sans CJK JP',sans-serif;transform:scaleX(0.9305);">編集(<u>E</u>)</div>
<div class="t" style="left:155.00px;top:20.9px;font-size:12px;line-height:16px;color:#1a1a1a;font-family:'Liberation Sans','Noto Sans CJK JP',sans-serif;transform:scaleX(0.9639);">表示(<u>V</u>)</div>
<div class="t" style="left:210.80px;top:20.9px;font-size:12px;line-height:16px;color:#1a1a1a;font-family:'Liberation Sans','Noto Sans CJK JP',sans-serif;transform:scaleX(0.9627);">挿入(<u>I</u>)</div>
<div class="t" style="left:260.40px;top:20.9px;font-size:12px;line-height:16px;color:#1a1a1a;font-family:'Liberation Sans','Noto Sans CJK JP',sans-serif;">書式(<u>O</u>)</div>
<div class="t" style="left:316.07px;top:20.9px;font-size:12px;line-height:16px;color:#1a1a1a;font-family:'Liberation Sans','Noto Sans CJK JP',sans-serif;transform:scaleX(1.0683);"><span class="k" style="transform:scaleX(0.68);margin-right:-15.36px">デバッグ</span>(<u>D</u>)</div>
<div class="t" style="left:385.96px;top:20.9px;font-size:12px;line-height:16px;color:#1a1a1a;font-family:'Liberation Sans','Noto Sans CJK JP',sans-serif;transform:scaleX(0.9589);">実行(<u>R</u>)</div>
<div class="t" style="left:440.14px;top:20.9px;font-size:12px;line-height:16px;color:#1a1a1a;font-family:'Liberation Sans','Noto Sans CJK JP',sans-serif;transform:scaleX(1.0438);"><span class="k" style="transform:scaleX(0.68);margin-right:-11.52px">ツール</span>(<u>T</u>)</div>
<div class="t" style="left:497.11px;top:20.9px;font-size:12px;line-height:16px;color:#1a1a1a;font-family:'Liberation Sans','Noto Sans CJK JP',sans-serif;transform:scaleX(1.0581);"><span class="k" style="transform:scaleX(0.68);margin-right:-15.36px">アドイン</span>(<u>A</u>)</div>
<div class="t" style="left:564.10px;top:20.9px;font-size:12px;line-height:16px;color:#1a1a1a;font-family:'Liberation Sans','Noto Sans CJK JP',sans-serif;transform:scaleX(1.0201);"><span class="k" style="transform:scaleX(0.68);margin-right:-19.20px">ウィンドウ</span>(<u>W</u>)</div>
<div class="t" style="left:643.00px;top:20.9px;font-size:12px;line-height:16px;color:#1a1a1a;font-family:'Liberation Sans','Noto Sans CJK JP',sans-serif;transform:scaleX(1.1173);"><span class="k" style="transform:scaleX(0.68);margin-right:-11.52px">ヘルプ</span>(<u>H</u>)</div>
<div class="cap" style="left:0;top:41px;width:249px"></div>
<div class="t" style="left:0.16px;top:40.8px;font-size:12px;line-height:16px;color:#1a1a1a;font-family:'Liberation Sans','Noto Sans CJK JP',sans-serif;transform:scaleX(0.8924);"><span class="k" style="transform:scaleX(0.75);margin-right:-18.00px">プロジェクト</span> - VBAProject</div>
<div class="xb" style="left:228px;top:42px"></div>
<svg class="a" style="left:228px;top:42px" width="20" height="20"><path d="M4.8 4.8 L14.6 14.6 M14.6 4.8 L4.8 14.6" stroke="#000" stroke-width="2" fill="none"/></svg>
<div class="a" style="left:237px;top:65px;width:11px;height:25px;background:linear-gradient(90deg,#c8c8c8,#a0a0a0);border-radius:0 4px 4px 0"></div>
<svg class="a" style="left:237px;top:78px" width="11" height="10"><path d="M3 1.5 H8.5" stroke="#000" stroke-width="1"/><path d="M3 4 L8.5 4 L5.75 7 Z" fill="#000"/></svg>
<div class="a" style="left:57px;top:66px;width:23px;height:22px;background:#cce4f7;border:1px solid #0078d7"></div>
<div class="a" style="left:53px;top:70px;width:1px;height:14px;background:#c8c8c8"></div>
<div class="sunk" style="left:1px;top:92px;width:247px;height:542px"></div>
<div class="a" style="left:80px;top:126px;width:102px;height:15px;background:#ececec"></div>
<div class="t" style="left:45.00px;top:94.0px;font-size:12px;line-height:16px;transform:scaleX(1.0611);"><b>VBAProject (Book1)</b></div>
<div class="t" style="left:63.21px;top:110.0px;font-size:12px;line-height:16px;transform:scaleX(0.9889);">Microsoft Excel Objects</div>
<div class="t" style="left:81.98px;top:126.0px;font-size:12px;line-height:16px;transform:scaleX(0.9649);">Sheet1 (元<span class="k" style="transform:scaleX(0.85);margin-right:-7.20px">のシート</span>)</div>
<div class="t" style="left:81.98px;top:142.0px;font-size:12px;line-height:16px;transform:scaleX(0.9630);">Sheet2 (元<span class="k" style="transform:scaleX(0.85);margin-right:-7.20px">のシート</span> (2))</div>
<div class="t" style="left:84.00px;top:158.3px;font-size:12px;line-height:16px;transform:scaleX(0.8982);">ThisWorkbook</div>
<div class="t" style="left:45.00px;top:174.0px;font-size:12px;line-height:16px;transform:scaleX(1.0576);"><b>VBAProject (shortcutTools.xlam)</b></div>
<svg class="a" style="left:0;top:60px" width="260" height="135" viewBox="609 60 260 135" fill="none">
<rect x="618.4" y="71.4" width="13.4" height="11.2" fill="#f4f7ff" stroke="#4a62a8" stroke-width="0.9"/><rect x="618.4" y="71.4" width="13.4" height="2.2" fill="#6f8fe6"/><path d="M618.9 73.6 V82.6" stroke="#9fb0dc" stroke-width="1.4"/><path d="M622 75.6 H625.4 M627 78 H630 M627 80.2 H630" stroke="#f0582a" stroke-width="1.2"/><path d="M627 75.6 H629.4 M622 78 H625.4 M622 80.2 H625.4" stroke="#5a78c8" stroke-width="1.1"/>
<rect x="640.6" y="70.5" width="14.2" height="12.1" fill="#f4f7ff" stroke="#4a62a8" stroke-width="0.9"/><rect x="640.6" y="70.5" width="14.2" height="2.3" fill="#6f8fe6"/><path d="M642.6 75.4 H646 M642.6 79.4 H646" stroke="#333" stroke-width="1.2"/><rect x="647.6" y="74.2" width="5.4" height="2.6" fill="#fff" stroke="#333" stroke-width="1"/><rect x="647.6" y="78.2" width="5.4" height="2.6" fill="#fff" stroke="#333" stroke-width="1"/>
<defs><linearGradient id="fg" x1="0" y1="0" x2="1" y2="1"><stop offset="0" stop-color="#fff0b0"/><stop offset=".55" stop-color="#f2c64e"/><stop offset="1" stop-color="#d89a18"/></linearGradient></defs>
<path d="M669.4 72.4 Q669.4 71.2 670.4 71.2 H674.6 L675.6 73 H683 Q683.8 73 683.8 74 V82.8 H669.4 Z" fill="url(#fg)" stroke="#8a6a18" stroke-width="0.7"/><path d="M669.4 82.8 H683.8 V74.5" stroke="#2a2210" stroke-width="1"/>
<rect x="618.5" y="98.5" width="8.4" height="8.4" rx="1" fill="#fff" stroke="#919191" stroke-width="1"/><path d="M620.4 102.7 H625" stroke="#3c4f9e" stroke-width="1.2"/>
<rect x="637.5" y="114.5" width="8.4" height="8.4" rx="1" fill="#fff" stroke="#919191" stroke-width="1"/><path d="M639.4 118.7 H644" stroke="#3c4f9e" stroke-width="1.2"/>
<rect x="618.5" y="178.0" width="8.4" height="8.4" rx="1" fill="#fff" stroke="#919191" stroke-width="1"/><path d="M620.4 182.2 H625" stroke="#3c4f9e" stroke-width="1.2"/><path d="M622.7 179.9 V184.5" stroke="#3c4f9e" stroke-width="1.2"/>
<path d="M622.5 108 V177 M627.5 102.5 H633 M641.5 110 V114 M646.5 118.5 H653 M660.5 126 V166 M660.5 134.5 H671 M660.5 150.5 H671 M660.5 166.5 H671 M627.5 182.5 H633" stroke="#8c8c8c" stroke-width="1" stroke-dasharray="1 1"/>
<path d="M634 105 L640 108.5 L648 105 L642 102.5 Z" fill="#7fe0f0" stroke="#222" stroke-width="0.9"/><path d="M636 98 L639.5 104 M638 97 H642 L644 103 M637 101 H643 M641 97 L639 103" stroke="#1a1a1a" stroke-width="1.3"/><path d="M636 97 H639" stroke="#20c8e0" stroke-width="1.6"/><path d="M642.5 97.5 L645.5 95.5" stroke="#222" stroke-width="1"/><circle cx="646" cy="95.6" r="1.3" fill="#20c020" stroke="#111" stroke-width=".5"/><circle cx="643" cy="98" r="1.1" fill="#e8e020"/><circle cx="644.5" cy="101" r="1.1" fill="#e020e0"/>
<path d="M634 184.5 L640 188.0 L648 184.5 L642 182.0 Z" fill="#7fe0f0" stroke="#222" stroke-width="0.9"/><path d="M636 177.5 L639.5 183.5 M638 176.5 H642 L644 182.5 M637 180.5 H643 M641 176.5 L639 182.5" stroke="#1a1a1a" stroke-width="1.3"/><path d="M636 176.5 H639" stroke="#20c8e0" stroke-width="1.6"/><path d="M642.5 177.0 L645.5 175.0" stroke="#222" stroke-width="1"/><circle cx="646" cy="175.1" r="1.3" fill="#20c020" stroke="#111" stroke-width=".5"/><circle cx="643" cy="177.5" r="1.1" fill="#e8e020"/><circle cx="644.5" cy="180.5" r="1.1" fill="#e020e0"/>
<path d="M654 123.5 V114.5 Q654 113.4 655 113.4 H659 L660.2 115 H666.6 V117.4" fill="#fffad0" stroke="#8c8c70" stroke-width="0.9"/><path d="M654 123.5 L656.6 117.4 H668.4 L666 123.5 Z" fill="#f4ec60" stroke="#8c8c30" stroke-width="0.9"/><path d="M656 121 H666 M657 119 H667" stroke="#fffbe0" stroke-width="0.9" stroke-dasharray="1 1"/>
<path d="M676 127.39999999999999 H683 L686.2 130.6 V140.0 H676 Z" fill="#fff" stroke="#111" stroke-width="1"/><rect x="672.6" y="130.2" width="9" height="7.6" fill="#fff" stroke="#111" stroke-width="1.1"/><path d="M672.6 132.79999999999998 H681.6 M672.6 135.29999999999998 H681.6 M675.8 130.2 V137.79999999999998 M678.8 130.2 V137.79999999999998" stroke="#111" stroke-width="1"/>
<path d="M676 143.60000000000002 H683 L686.2 146.8 V156.20000000000002 H676 Z" fill="#fff" stroke="#111" stroke-width="1"/><rect x="672.6" y="146.4" width="9" height="7.6" fill="#fff" stroke="#111" stroke-width="1.1"/><path d="M672.6 149.0 H681.6 M672.6 151.5 H681.6 M675.8 146.4 V154.0 M678.8 146.4 V154.0" stroke="#111" stroke-width="1"/>
<path d="M675.5 160 H683 L686 163 V172 H675.5 Z" fill="#fff" stroke="#111" stroke-width="1"/><path d="M672.5 162 L680.5 169.5 M680.5 162 L672.5 169.5" stroke="#148a14" stroke-width="2.4" stroke-dasharray="1.4 .6"/>
</svg>
<div class="a" style="left:57px;top:119.4px;width:154px;height:43.3px;border:4.7px solid #ed1c24"></div>
<div class="cap" style="left:0;top:641px;width:249px"></div>
<div class="t" style="left:0.15px;top:640.9px;font-size:12px;line-height:16px;color:#1a1a1a;font-family:'Liberation Sans','Noto Sans CJK JP',sans-serif;transform:scaleX(0.8987);"><span class="k" style="transform:scaleX(0.75);margin-right:-15.00px">プロパティ</span> - Sheet1</div>
<div class="xb" style="left:228px;top:642px"></div>
<svg class="a" style="left:228px;top:642px" width="20" height="20"><path d="M4.8 4.8 L14.6 14.6 M14.6 4.8 L4.8 14.6" stroke="#000" stroke-width="2" fill="none"/></svg>
<div class="a" style="left:1px;top:667px;width:246px;height:18px;background:#fff;border:1px solid #7a7a7a"></div>
<div class="t" style="left:2.52px;top:668.3px;font-size:12px;line-height:16px;transform:scaleX(1.0290);"><b>Sheet1</b></div>
<div class="t" style="left:50.20px;top:668.3px;font-size:12px;line-height:16px;transform:scaleX(0.9052);">Worksheet</div>
<svg class="a" style="left:231px;top:672px" width="12" height="8"><path d="M1.5 1.5 L6 6 L10.5 1.5" stroke="#444" stroke-width="1.1" fill="none"/></svg>
<div class="a" style="left:0;top:708px;width:247px;height:262px;background:#fff;border-top:1px solid #dadada;border-right:1px solid #e2e2e2"></div>
<div class="a" style="left:45px;top:689px;width:45px;height:19px;background:#f0f0f0;border:1px solid #d9d9d9;border-bottom:none"></div>
<div class="a" style="left:0;top:687px;width:45px;height:22px;background:#fff;border:1px solid #d9d9d9;border-bottom:none;border-left:none"></div>
<div class="t" style="left:7.14px;top:689.5px;font-size:12px;line-height:16px;transform:scaleX(0.9863);">全体</div>
<div class="t" style="left:49.58px;top:690.6px;font-size:12px;line-height:16px;transform:scaleX(1.0376);">項目別</div>
<div class="a" style="left:4px;top:709px;width:241px;height:258px;background:#fff;border:1px solid #828282;box-shadow:inset 1px 1px 0 #fff, inset 2px 2px 0 #a0a0a0,inset -1px -1px 0 #fff,inset -2px -2px 0 #c0c0c0"></div>
<div class="a" style="left:7px;top:712px;width:120px;height:14px;background:#f0f0f0"></div>
<div class="t" style="left:6.09px;top:711.3px;font-size:12px;line-height:16px;transform:scaleX(0.9232);">(<span class="k" style="transform:scaleX(0.8);margin-right:-14.40px">オブジェクト</span>名)</div>
<div class="t" style="left:128.60px;top:711.3px;font-size:12px;line-height:16px;color:#6d6d6d;transform:scaleX(0.9420);">Sheet1</div>
<div class="prl" style="left:7px;top:726px;width:235px"></div>
<div class="t" style="left:7.26px;top:726.3px;font-size:12px;line-height:16px;transform:scaleX(0.9438);">DisplayPageBreaks</div>
<div class="t" style="left:129.45px;top:726.3px;font-size:12px;line-height:16px;color:#6d6d6d;transform:scaleX(0.9586);">False</div>
<div class="prl" style="left:7px;top:741px;width:235px"></div>
<div class="t" style="left:7.22px;top:741.3px;font-size:12px;line-height:16px;transform:scaleX(0.9763);">DisplayRightToLeft</div>
<div class="t" style="left:129.45px;top:741.3px;font-size:12px;line-height:16px;color:#6d6d6d;transform:scaleX(0.9586);">False</div>
<div class="prl" style="left:7px;top:756px;width:235px"></div>
<div class="t" style="left:7.26px;top:756.3px;font-size:12px;line-height:16px;transform:scaleX(0.9541);">EnableAutoFilter</div>
<div class="t" style="left:129.45px;top:756.3px;font-size:12px;line-height:16px;color:#6d6d6d;transform:scaleX(0.9586);">False</div>
<div class="prl" style="left:7px;top:771px;width:235px"></div>
<div class="t" style="left:7.26px;top:771.3px;font-size:12px;line-height:16px;transform:scaleX(0.9445);">EnableCalculation</div>
<div class="t" style="left:130.21px;top:771.3px;font-size:12px;line-height:16px;color:#6d6d6d;transform:scaleX(0.9239);">True</div>
<div class="prl" style="left:7px;top:786px;width:235px"></div>
<div class="a" style="left:7px;top:786.3px;width:120px;height:15px;overflow:hidden"><div class="t nf" style="left:1.00px;top:-0.2px;font-size:12px;line-height:16px;letter-spacing:-0.35px;">EnableFormatConditionsCalculation</div>
</div>
<div class="t" style="left:130.21px;top:786.3px;font-size:12px;line-height:16px;color:#6d6d6d;transform:scaleX(0.9239);">True</div>
<div class="prl" style="left:7px;top:801px;width:235px"></div>
<div class="t" style="left:7.25px;top:801.3px;font-size:12px;line-height:16px;transform:scaleX(0.9454);">EnableOutlining</div>
<div class="t" style="left:129.45px;top:801.3px;font-size:12px;line-height:16px;color:#6d6d6d;transform:scaleX(0.9586);">False</div>
<div class="prl" style="left:7px;top:816px;width:235px"></div>
<div class="t" style="left:7.25px;top:816.3px;font-size:12px;line-height:16px;transform:scaleX(0.9531);">EnablePivotTable</div>
<div class="t" style="left:129.45px;top:816.3px;font-size:12px;line-height:16px;color:#6d6d6d;transform:scaleX(0.9586);">False</div>
<div class="prl" style="left:7px;top:831px;width:235px"></div>
<div class="t" style="left:7.25px;top:831.3px;font-size:12px;line-height:16px;transform:scaleX(0.9387);">EnableSelection</div>
<div class="t" style="left:130.27px;top:831.3px;font-size:12px;line-height:16px;color:#6d6d6d;">0 - xlNoRestrictions</div>
<div class="prl" style="left:7px;top:846px;width:235px"></div>
<div class="t" style="left:7.24px;top:846.3px;font-size:12px;line-height:16px;transform:scaleX(0.9353);">Name</div>
<div class="t" style="left:128.41px;top:846.3px;font-size:12px;line-height:16px;color:#6d6d6d;transform:scaleX(0.9877);">元<span class="k" style="transform:scaleX(0.85);margin-right:-7.20px">のシート</span></div>
<div class="prl" style="left:7px;top:861px;width:235px"></div>
<div class="t" style="left:6.98px;top:861.3px;font-size:12px;line-height:16px;transform:scaleX(0.9673);">ScrollArea</div>
<div class="prl" style="left:7px;top:876px;width:235px"></div>
<div class="t" style="left:7.01px;top:876.3px;font-size:12px;line-height:16px;transform:scaleX(0.9323);">StandardWidth</div>
<div class="t" style="left:130.20px;top:876.3px;font-size:12px;line-height:16px;color:#6d6d6d;transform:scaleX(0.8379);">8.38</div>
<div class="prl" style="left:7px;top:891px;width:235px"></div>
<div class="t" style="left:7.61px;top:891.3px;font-size:12px;line-height:16px;transform:scaleX(0.9914);">Visible</div>
<div class="t" style="left:128.87px;top:891.3px;font-size:12px;line-height:16px;color:#6d6d6d;transform:scaleX(1.0327);">-1 - xlSheetVisible</div>
<div class="prl" style="left:7px;top:906px;width:235px"></div>
<div class="a" style="left:127px;top:712px;width:1px;height:194px;background:#c0c0c0"></div>
<div class="a" style="left:255px;top:42px;width:420px;height:750px;background:#f0f0f0;border:1px solid;border-color:#a0a0a0 #fff #fff #a0a0a0;box-shadow:inset 1px 1px 0 #696969"></div>
<div class="a" style="left:266px;top:45px;width:400px;height:20px;background:#fff;border:1px solid #7a7a7a"></div>
<div class="t" style="left:269.77px;top:46.3px;font-size:12px;line-height:16px;transform:scaleX(1.0732);"><b>(General)</b></div>
<div class="a" style="left:257px;top:67px;width:410px;height:723px;background:#fff;border:1px solid;border-color:#a0a0a0 #fff #fff #a0a0a0;box-shadow:inset 1px 1px 0 #696969"></div>
<div class="a" style="left:259px;top:69px;width:20px;height:703px;background:#f0f0f0"></div>
<div class="a" style="left:279px;top:69px;width:1px;height:703px;background:#000"></div>
<div class="a" style="left:280px;top:83px;width:400px;height:1px;background:#808080"></div>
<div class="t nf" style="left:290.60px;top:70.2px;font-size:14px;line-height:14px;font-family:'Liberation Mono','IPAGothic',monospace;white-space:pre;"><span class="kw" style="display:inline-block;font-size:13.3px;transform:scaleX(.8772);transform-origin:0 50%;margin-right:-14.70px">Option Explicit</span></div>
<div class="t nf" style="left:290.60px;top:96.5px;font-size:14px;line-height:14px;font-family:'Liberation Mono','IPAGothic',monospace;white-space:pre;"><span class="kw" style="display:inline-block;font-size:13.3px;transform:scaleX(.8772);transform-origin:0 50%;margin-right:-3.92px">Sub </span>テスト<span style="display:inline-block;font-size:13.3px;transform:scaleX(.8772);transform-origin:0 50%;margin-right:-1.96px">()</span></div>
<div class="t nf" style="left:290.60px;top:109.6px;font-size:14px;line-height:14px;font-family:'Liberation Mono','IPAGothic',monospace;white-space:pre;"><span style="display:inline-block;font-size:13.3px;transform:scaleX(.8772);transform-origin:0 50%;margin-right:-23.52px">    MsgBox "hello world"</span></div>
<div class="t nf" style="left:290.60px;top:122.3px;font-size:14px;line-height:14px;font-family:'Liberation Mono','IPAGothic',monospace;white-space:pre;"><span class="kw" style="display:inline-block;font-size:13.3px;transform:scaleX(.8772);transform-origin:0 50%;margin-right:-6.86px">End Sub</span></div>
<div class="a" style="left:259px;top:772px;width:400px;height:16px;background:#f0f0f0"></div>
<div class="a" style="left:310px;top:772px;width:133px;height:15px;background:#cdcdcd"></div>
<div class="a" style="left:259px;top:771px;width:16px;height:17px;background:#f0f0f0;border:1px solid;border-color:#f0f0f0 #696969 #696969 #f0f0f0;box-shadow:inset -1px -1px 0 #a0a0a0"></div>
<div class="a" style="left:275px;top:771px;width:17px;height:17px;background:#f8f8f8;border:1px solid;border-color:#696969 #f0f0f0 #f0f0f0 #696969"></div>
<svg class="a" style="left:259px;top:771px" width="50" height="17"><path d="M3.5 3.5 H13 M7 6.5 H13" stroke="#000" stroke-width="1"/><path d="M21 4.5 H30 M24 7.5 H30 M21 10.5 H30 M24 13.5 H30" stroke="#000" stroke-width="1"/><path d="M44.2 5 L40.2 8.6 L44.2 12.2" stroke="#505050" stroke-width="2.1" fill="none"/></svg>
<div class="cap" style="left:255px;top:798px;width:318px"></div>
<div class="t" style="left:255.35px;top:797.4px;font-size:12px;line-height:16px;color:#1a1a1a;font-family:'Liberation Sans','Noto Sans CJK JP',sans-serif;transform:scaleX(0.8944);"><span class="k" style="transform:scaleX(0.75);margin-right:-21.00px">イミディエイト</span></div>
<div class="xb" style="left:552px;top:799px"></div>
<svg class="a" style="left:552px;top:799px" width="20" height="20"><path d="M4.8 4.8 L14.6 14.6 M14.6 4.8 L4.8 14.6" stroke="#000" stroke-width="2" fill="none"/></svg>
<div class="sunk" style="left:255px;top:821px;width:318px;height:150px"></div>
<div class="a" style="left:555px;top:823px;width:17px;height:131px;background:#f0f0f0"></div>
<div class="a" style="left:555px;top:839px;width:16px;height:97px;background:#cdcdcd"></div>
<div class="a" style="left:257px;top:954px;width:315px;height:16px;background:#f0f0f0"></div>
<div class="a" style="left:274px;top:954px;width:17px;height:15px;background:#cdcdcd"></div>
<svg class="a" style="left:555px;top:823px" width="17" height="131"><path d="M4.5 12.6 L8.3 8.6 L12.1 12.6" stroke="#505050" stroke-width="2.1" fill="none"/><path d="M4.5 120.6 L8.3 124.6 L12.1 120.6" stroke="#505050" stroke-width="2.1" fill="none"/></svg>
<svg class="a" style="left:257px;top:954px" width="300" height="16"><path d="M11 4 L7 7.7 L11 11.4" stroke="#505050" stroke-width="2.1" fill="none"/><path d="M288 4 L292 7.7 L288 11.4" stroke="#505050" stroke-width="2.1" fill="none"/></svg>
<div class="cap" style="left:579px;top:798px;width:90px"></div>
<div class="t" style="left:579.72px;top:797.3px;font-size:12px;line-height:16px;color:#1a1a1a;font-family:'Liberation Sans','Noto Sans CJK JP',sans-serif;transform:scaleX(0.8928);"><span class="k" style="transform:scaleX(0.75);margin-right:-12.00px">ウォッチ</span></div>
<div class="sunk" style="left:579px;top:821px;width:90px;height:150px"></div>
<div class="a" style="left:581px;top:823px;width:90px;height:13px;background:#f0f0f0;border-bottom:1px solid #696969"></div>
<div class="t" style="left:584.96px;top:821.5px;font-size:12px;line-height:16px;transform:scaleX(1.1427);">式</div>
<div class="a" style="left:0;top:972px;width:659px;height:2px;background:#151515"></div>
</div>
</body></html>
